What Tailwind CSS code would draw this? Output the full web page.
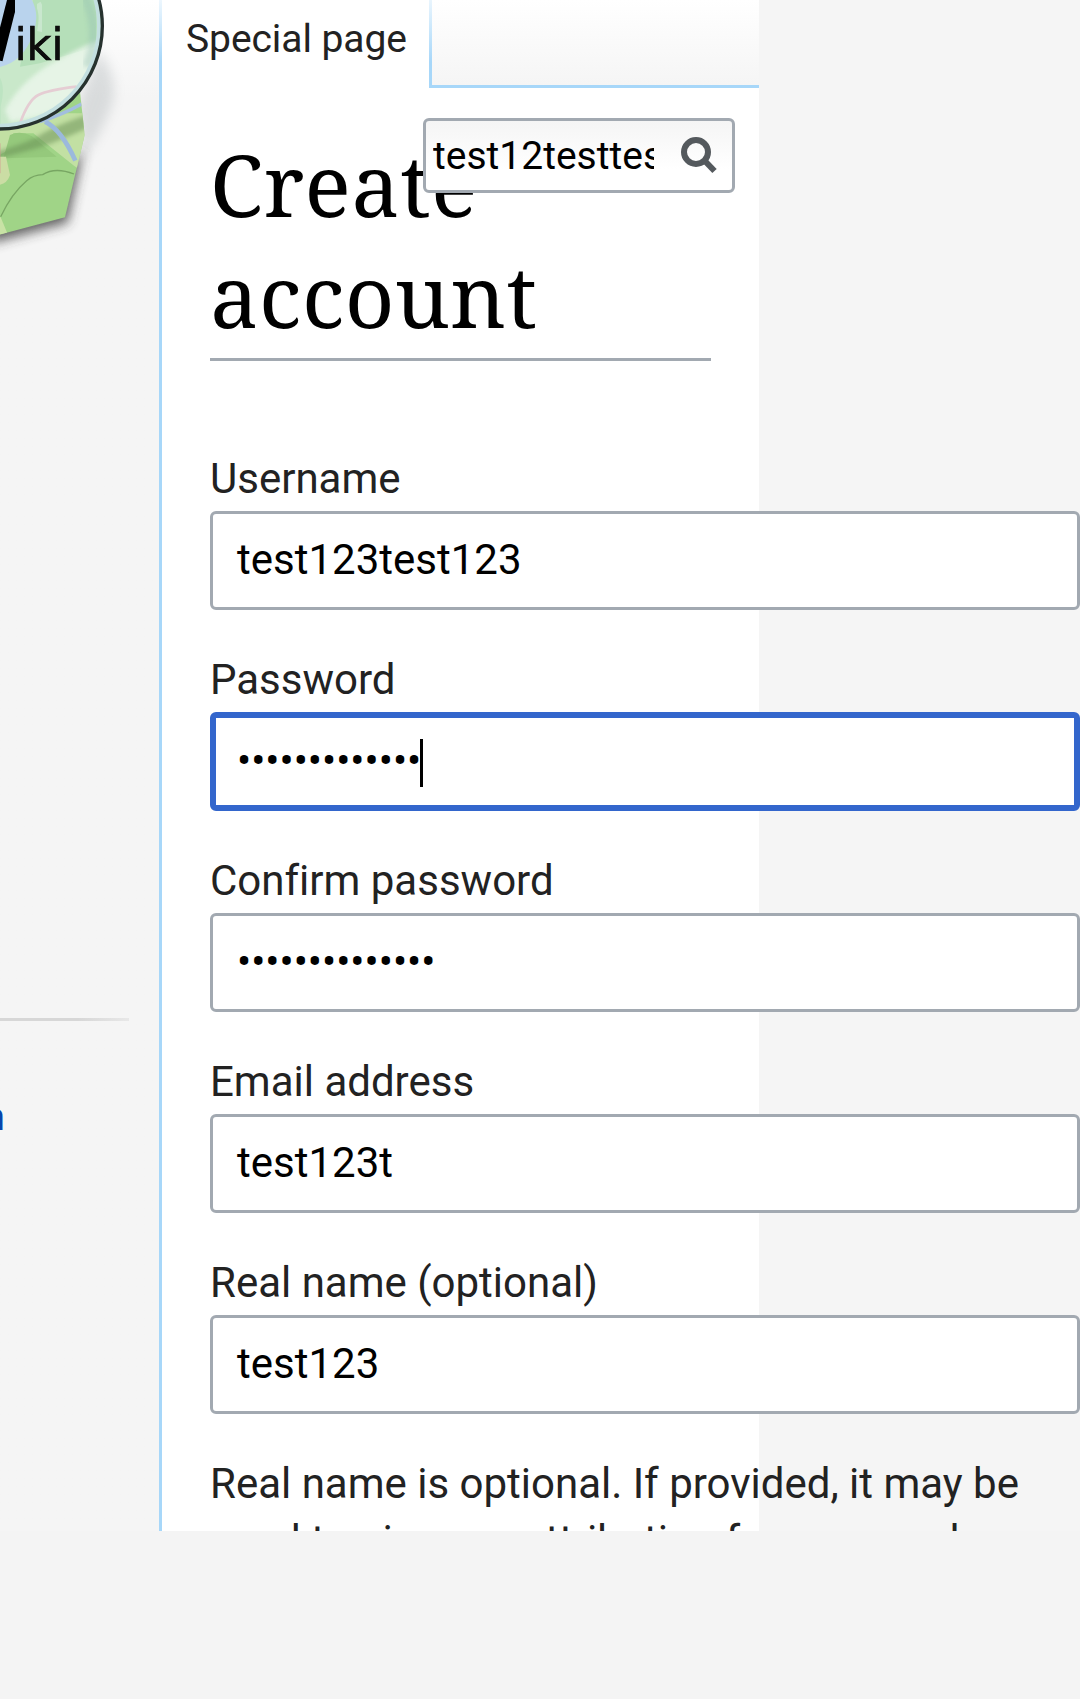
<!DOCTYPE html>
<html lang="en">
<head>
<meta charset="utf-8">
<title>Create account</title>
<script src="https://cdn.jsdelivr.net/npm/@tailwindcss/browser@4"></script>
</head>
<body class="bg-[#f4f4f4] font-[Roboto,sans-serif] text-[#222] [font-variant-ligatures:none]">
<div class="flex h-[1531px] w-[1080px] overflow-hidden bg-[#f5f5f5]">
  <aside class="h-full w-[159px] shrink-0 overflow-hidden bg-linear-to-b from-white to-[#f5f5f5] to-[98px]">
    <svg class="block" width="159" height="260" viewBox="0 0 477 780">
      <defs>
        <filter id="soft" x="-50%" y="-50%" width="200%" height="200%"><feGaussianBlur stdDeviation="17"/></filter>
        <filter id="fine" x="-20%" y="-20%" width="140%" height="140%"><feGaussianBlur stdDeviation="7"/></filter>
        <filter id="edge"><feGaussianBlur stdDeviation="1.8"/></filter>
        <clipPath id="lens"><circle cx="-2" cy="78" r="309"/></clipPath>
        <clipPath id="sheet"><path d="M-10 200H232L254 405 195 652-10 706Z"/></clipPath>
      </defs>
      <path d="M295 150Q365 240 330 330T250 470L230 330Z" fill="#69767a" opacity=".2" filter="url(#soft)"/>
      <path d="M-30 480H225L252 440 203 668-30 730Z" fill="#333" opacity=".75" filter="url(#soft)"/>
      <g clip-path="url(#sheet)">
        <path d="M-10 200H270V720H-10Z" fill="#a0d487"/>
        <path d="M30 340H270V530L222 497 100 400 40 400 25 450-10 470V340Z" fill="#c2e0a3"/>
        <path d="M30 405Q60 390 95 408L170 470 10 475Z" fill="#95c97c"/>
        <path d="M-10 455Q80 430 120 405T260 345V385Q150 435 100 448T-10 478Z" fill="#668c52" opacity=".5" filter="url(#fine)"/>
        <path d="M-10 470H18L30 525Q20 555-10 555Z" fill="#cbdda4"/>
        <path d="M-10 430V520" stroke="#d58c8d" stroke-width="22"/>
        <path d="M2 652L22 700-10 706V650Z" fill="#c8e2a5"/>
        <path d="M2 650Q35 580 80 542 100 525 128 524 165 500 222 522" fill="none" stroke="#78a663" stroke-width="4"/>
        <path d="M135 365Q185 390 226 482" fill="none" stroke="#9bb9dc" stroke-width="14"/>
        <path d="M120 365Q185 345 245 312" fill="none" stroke="#a2bedf" stroke-width="10"/>
      </g>
      <g clip-path="url(#lens)">
        <path d="M-10-10H320V400H-10Z" fill="#c9e8ca"/>
        <path d="M100-10H320V130L120 190 60 200Z" fill="#b5dfb9"/>
        <path d="M-10-10H90Q122 40 100 100 70 190-10 203Z" fill="#b9d3ed"/>
        <path d="M114 10Q132 40 120 95" stroke="#c9e7ce" stroke-width="18" fill="none" filter="url(#edge)"/>
        <path d="M15 330Q60 245 155 190T300 120V230Q200 350 30 365Z" fill="#eff8ef" opacity=".75" filter="url(#fine)"/>
        <path d="M-10 220Q20 250 2 320V400H-10Z" fill="#bde4c2"/>
        <path d="M60 370Q85 300 115 285T230 260" fill="none" stroke="#e5cdd3" stroke-width="8"/>
        <path d="M255-10Q305 100 260 200" fill="none" stroke="#8fbcb0" stroke-width="28" opacity=".35" filter="url(#fine)"/>
        <circle cx="-2" cy="78" r="299" fill="none" stroke="#c3dfe0" stroke-width="12"/>
      </g>
      <circle cx="-2" cy="78" r="309" fill="none" stroke="#26302f" stroke-width="10" filter="url(#edge)"/>
      <path d="M40-10L-8 180" stroke="#000" stroke-width="32" filter="url(#edge)"/>
      <text x="44" y="180" textLength="146" lengthAdjust="spacingAndGlyphs" class="font-['DejaVu_Sans',sans-serif] text-[134px]" fill="#080808" stroke="#080808" stroke-width="2" filter="url(#edge)">iki</text>
    </svg>
    <div class="mt-[758px] h-[3px] w-[129px] bg-linear-to-r from-[#d7d7d7] from-60% to-[#e8e8e8]"></div>
    <a class="mt-[76px] flex h-[40px] w-[5px] justify-end text-[39px] leading-[40px] text-[#0645ad]">n</a>
  </aside>

  <main class="relative h-full w-[600px] shrink-0 border-l-[3px] border-[#a7d7f9] bg-white">
    <div class="absolute -left-[3px] top-0 h-[62px] w-[3px] bg-linear-to-b from-white/80 to-transparent"></div>
    <nav class="flex h-[88px]">
      <div class="w-[267px] shrink-0 pl-[24px] pt-[14px] text-[39px] leading-[50px] tracking-[-0.07px] whitespace-nowrap">Special page</div>
      <div class="w-[3px] shrink-0 bg-linear-to-b from-[#e9f5fd] to-[#a7d7f9] to-[62px]"></div>
      <div class="grow border-b-[3px] border-[#a7d7f9] bg-linear-to-b from-white to-[#f5f5f5]"></div>
    </nav>
    <form class="absolute left-[261px] top-[118px] flex h-[75px] w-[312px] items-center rounded-[6px] border-[3px] border-[#a2a9b1] bg-linear-to-b from-[#f5f5f5] to-white to-70% pl-[7px]">
      <div class="w-[221px] overflow-hidden text-[39px] leading-[50px] whitespace-nowrap text-black">test12testtest</div>
      <svg class="ml-[27px]" width="37" height="38" viewBox="0 0 37 38"><circle cx="15" cy="15" r="12" fill="none" stroke="#54595d" stroke-width="6"/><path d="M22.5 22.5L33.5 34" stroke="#54595d" stroke-width="6"/></svg>
    </form>
    <section class="w-[918px] pl-[48px] pt-[40px]">
      <h1 class="h-[233px] w-[501px] border-b-[3px] border-[#a2a9b1] font-['Noto_Serif','Droid_Serif','DejaVu_Serif',serif] text-[86.4px] leading-[111px] tracking-[0.4px] text-black">Create<br>account</h1>
      <div class="flex flex-col pt-[87px]">
        <div class="h-[201px]">
          <label class="block h-[63px] text-[42px] leading-[62px]">Username</label>
          <div class="flex h-[99px] items-center rounded-[6px] border-[3px] border-[#a2a9b1] bg-white pb-[2px] pl-[24px] text-[42px] leading-[50px] text-black">test123test123</div>
        </div>
        <div class="h-[201px]">
          <label class="block h-[63px] text-[42px] leading-[62px]">Password</label>
          <div class="flex h-[99px] items-center rounded-[6px] border-[6px] border-[#36c] bg-white pb-[2px] pl-[21px] text-[42px] leading-[50px] text-black">•••••••••••••<span class="-ml-px mt-[5px] h-[48px] w-[3px] bg-black"></span></div>
        </div>
        <div class="h-[201px]">
          <label class="block h-[63px] text-[42px] leading-[62px]">Confirm password</label>
          <div class="flex h-[99px] items-center rounded-[6px] border-[3px] border-[#a2a9b1] bg-white pb-[2px] pl-[24px] text-[42px] leading-[50px] text-black">••••••••••••••</div>
        </div>
        <div class="h-[201px]">
          <label class="block h-[63px] text-[42px] leading-[62px]">Email address</label>
          <div class="flex h-[99px] items-center rounded-[6px] border-[3px] border-[#a2a9b1] bg-white pb-[2px] pl-[24px] text-[42px] leading-[50px] text-black">test123t</div>
        </div>
        <div class="h-[201px]">
          <label class="block h-[63px] text-[42px] leading-[62px]">Real name (optional)</label>
          <div class="flex h-[99px] items-center rounded-[6px] border-[3px] border-[#a2a9b1] bg-white pb-[2px] pl-[24px] text-[42px] leading-[50px] text-black">test123</div>
        </div>
        <p class="pt-[2px] text-[42px] leading-[57px] whitespace-nowrap">Real name is optional. If provided, it may be<br>used to give you attribution for your work.</p>
      </div>
    </section>
  </main>
</div>
</body>
</html>
